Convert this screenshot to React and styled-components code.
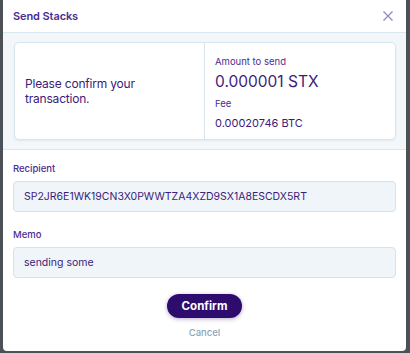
import React from "react";
import styled, { createGlobalStyle } from "styled-components";

const Global = createGlobalStyle`
  html, body { margin: 0; padding: 0; background: #4c5158; }
  body { font-family: Inter, "Noto Sans", sans-serif; }
  * { box-sizing: border-box; }
`;

const Frame = styled.div`
  width: 410px;
  height: 353px;
  background: #4c5158;
  padding: 0 4px 2px 3px;
  display: flex;
`;

const Modal = styled.div`
  flex: 1;
  background: #fff;
  border-radius: 0 0 4px 4px;
  display: flex;
  flex-direction: column;
  overflow: hidden;
`;

const Header = styled.div`
  height: 33px;
  display: flex;
  align-items: center;
  justify-content: space-between;
  padding: 0 12px 0 10px;
  border-bottom: 1px solid #dbe7ef;
`;

const Title = styled.div`
  font-size: 11px;
  font-weight: 600;
  letter-spacing: -0.1px;
  color: #4b2c93;
`;

const Close = styled.svg`
  width: 12px;
  height: 12px;
`;

const Summary = styled.div`
  background: #f3f7fa;
  padding: 9px 10px 9px 11px;
  border-bottom: 1px solid #dbe7ef;
`;

const Card = styled.div`
  display: grid;
  grid-template-columns: 190px 1fr;
  height: 98px;
  background: #fff;
  border: 1px solid #d8e5ee;
  border-radius: 5px;
  box-shadow: 0 1px 2px rgba(40, 70, 100, 0.08);
`;

const CardLeft = styled.div`
  display: flex;
  align-items: center;
  padding: 0 10px;
  border-right: 1px solid #d8e5ee;
  font-size: 12px;
  letter-spacing: -0.2px;
  line-height: 15px;
  color: #3b1c7a;
`;

const CardRight = styled.div`
  display: flex;
  flex-direction: column;
  padding: 12px 10px 0 10px;
`;

const Small = styled.div`
  font-size: ${(p) => (p.$strong ? 11 : 9.5)}px;
  line-height: 13px;
  color: ${(p) => (p.$strong ? "#3b1c7a" : "#4b2c93")};
  margin-top: ${(p) => p.$mt || 0}px;
`;

const Big = styled.div`
  font-size: 15.5px;
  line-height: 20px;
  color: #3b1c7a;
  margin-top: 4px;
`;

const Form = styled.div`
  display: flex;
  flex-direction: column;
  padding: 12px 10px 0 10px;
`;

const Label = styled.div`
  font-size: 9.5px;
  font-weight: 500;
  color: #4b2c93;
  line-height: 13px;
  margin-bottom: 6px;
`;

const Field = styled.div`
  height: 31px;
  background: #eff5f9;
  border: 1px solid #d3e2ed;
  border-radius: 4px;
  display: flex;
  align-items: center;
  padding: 0 10px;
  font-size: 10.5px;
  color: #3b1c7a;
  margin-bottom: ${(p) => p.$mb || 0}px;
`;

const Actions = styled.div`
  display: flex;
  flex-direction: column;
  align-items: center;
  padding-top: 16px;
`;

const ConfirmButton = styled.button`
  width: 75px;
  height: 24px;
  border: none;
  border-radius: 12px;
  background: #2e0c6e;
  color: #fff;
  font-family: inherit;
  font-size: 11.5px;
  font-weight: 700;
  box-shadow: 0 1px 4px rgba(46, 12, 110, 0.35);
  cursor: pointer;
`;

const CancelLink = styled.div`
  margin-top: 9px;
  font-size: 9.5px;
  font-weight: 500;
  color: #8aa5b9;
`;

export default function App() {
  return (
    <>
      <Global />
      <Frame>
        <Modal>
          <Header>
            <Title>Send Stacks</Title>
            <Close viewBox="0 0 12 12">
              <path d="M1.5 1.5 L10.5 10.5 M10.5 1.5 L1.5 10.5" stroke="#9a89c6" strokeWidth="1.4" fill="none" />
            </Close>
          </Header>
          <Summary>
            <Card>
              <CardLeft>Please confirm your transaction.</CardLeft>
              <CardRight>
                <Small>Amount to send</Small>
                <Big>0.000001 STX</Big>
                <Small $mt={5}>Fee</Small>
                <Small $mt={7} $strong>0.00020746 BTC</Small>
              </CardRight>
            </Card>
          </Summary>
          <Form>
            <Label>Recipient</Label>
            <Field $mb={16}>SP2JR6E1WK19CN3X0PWWTZA4XZD9SX1A8ESCDX5RT</Field>
            <Label>Memo</Label>
            <Field>sending some</Field>
          </Form>
          <Actions>
            <ConfirmButton>Confirm</ConfirmButton>
            <CancelLink>Cancel</CancelLink>
          </Actions>
        </Modal>
      </Frame>
    </>
  );
}
